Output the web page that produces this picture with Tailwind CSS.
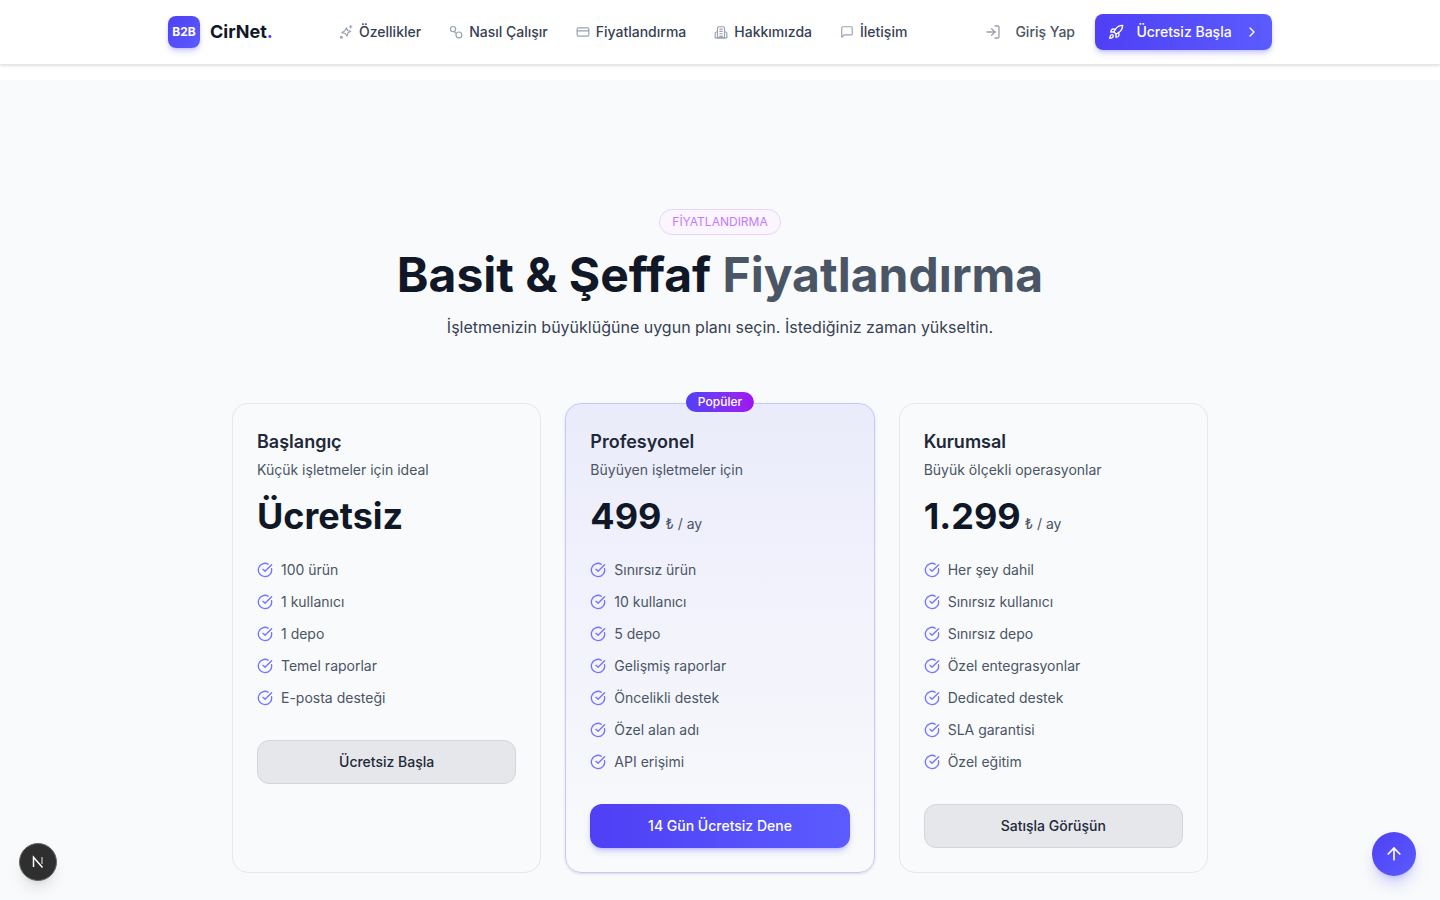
<!DOCTYPE html>
<html lang="tr">
<head>
<meta charset="utf-8">
<title>CirNet</title>
<script src="https://cdn.jsdelivr.net/npm/@tailwindcss/browser@4"></script>
</head>
<body class="bg-white font-['Inter',sans-serif] h-[900px] overflow-hidden relative">
<header class="h-[65px] bg-white border-b border-gray-200 shadow-sm">
  <div class="w-[1104px] mx-auto h-16 flex items-center">
    <div class="flex items-center gap-2.5 w-[171px]">
      <div class="w-8 h-8 rounded-lg bg-gradient-to-br from-[#4f3ff5] to-[#5b5bff] shadow-md shadow-indigo-500/30 flex items-center justify-center text-white text-xs font-bold">B2B</div>
      <span class="text-lg font-bold text-gray-900">CirNet<span class="text-[#4f46ff]">.</span></span>
    </div>
    <nav class="flex items-center gap-7 text-sm font-medium text-gray-700">
      <a class="flex items-center gap-1.5"><svg class="w-3.5 h-3.5 text-gray-400" viewBox="0 0 24 24" fill="none" stroke="currentColor" stroke-width="2" stroke-linecap="round" stroke-linejoin="round"><path d="M13 5l1.6 4.4L20 11l-4.6 2.4L14 19l-3.2-4.4L5 13l4.8-2.6z"/><path d="M20 1v4M18 3h4"/><circle cx="4" cy="21" r="1.6"/></svg>Özellikler</a>
      <a class="flex items-center gap-1.5"><svg class="w-3.5 h-3.5 text-gray-400" viewBox="0 0 24 24" fill="none" stroke="currentColor" stroke-width="2" stroke-linecap="round"><circle cx="7" cy="7" r="4.5"/><circle cx="17" cy="17" r="5"/><path d="M9 11.500l2.500 2.500"/></svg>Nasıl Çalışır</a>
      <a class="flex items-center gap-1.5"><svg class="w-3.5 h-3.5 text-gray-400" viewBox="0 0 24 24" fill="none" stroke="currentColor" stroke-width="2" stroke-linecap="round" stroke-linejoin="round"><rect x="2" y="5" width="20" height="14" rx="2"/><path d="M2 10h20"/></svg>Fiyatlandırma</a>
      <a class="flex items-center gap-1.5"><svg class="w-3.5 h-3.5 text-gray-400" viewBox="0 0 24 24" fill="none" stroke="currentColor" stroke-width="2" stroke-linecap="round" stroke-linejoin="round"><path d="M6 22V5a2 2 0 0 1 2-2h8a2 2 0 0 1 2 2v17z"/><path d="M6 12H4a2 2 0 0 0-2 2v8h20v-8a2 2 0 0 0-2-2h-2"/><path d="M10 7h4M10 11h4M10 15h4M10 22v-3h4v3"/></svg>Hakkımızda</a>
      <a class="flex items-center gap-1.5"><svg class="w-3.5 h-3.5 text-gray-400" viewBox="0 0 24 24" fill="none" stroke="currentColor" stroke-width="2" stroke-linecap="round" stroke-linejoin="round"><path d="M21 15a2 2 0 0 1-2 2H7l-4 4V5a2 2 0 0 1 2-2h14a2 2 0 0 1 2 2z"/></svg>İletişim</a>
    </nav>
    <div class="ml-auto flex items-center gap-5">
      <a class="flex items-center gap-3.5 text-sm font-medium text-gray-600"><svg class="w-4 h-4 text-gray-400" viewBox="0 0 24 24" fill="none" stroke="currentColor" stroke-width="2" stroke-linecap="round" stroke-linejoin="round"><path d="M15 3h4a2 2 0 0 1 2 2v14a2 2 0 0 1-2 2h-4"/><path d="m10 17 5-5-5-5"/><path d="M15 12H3"/></svg>Giriş Yap</a>
      <a class="h-9 w-[177px] pl-px rounded-lg bg-gradient-to-r from-[#4f3ff5] to-[#5b5bff] shadow-md shadow-indigo-500/30 flex items-center justify-center gap-3 text-sm font-medium text-white"><svg class="w-4 h-4" viewBox="0 0 24 24" fill="none" stroke="currentColor" stroke-width="2" stroke-linecap="round" stroke-linejoin="round"><path d="M4.5 16.5c-1.5 1.26-2 5-2 5s3.74-.5 5-2c.71-.84.7-2.13-.09-2.91a2.18 2.18 0 0 0-2.91-.09z"/><path d="m12 15-3-3a22 22 0 0 1 2-3.95A12.88 12.88 0 0 1 22 2c0 2.72-.78 7.5-6 11a22.35 22.35 0 0 1-4 2z"/><path d="M9 12H4s.55-3.03 2-4c1.62-1.08 5 0 5 0"/><path d="M12 15v5s3.03-.55 4-2c1.08-1.62 0-5 0-5"/></svg>Ücretsiz Başla<svg class="w-4 h-4" viewBox="0 0 24 24" fill="none" stroke="currentColor" stroke-width="2" stroke-linecap="round" stroke-linejoin="round"><path d="m9 18 6-6-6-6"/></svg></a>
    </div>
  </div>
</header>
<main class="mt-[15px] bg-gray-50 h-[820px] pt-[129px]">
  <div class="flex flex-col items-center">
    <span class="h-[26px] px-3 rounded-full bg-purple-50 border border-purple-200 text-purple-400 text-xs font-normal flex items-center">FİYATLANDIRMA</span>
    <h1 class="mt-2 text-5xl font-bold text-gray-900 leading-[64px]">Basit &amp; Şeffaf <span class="text-gray-600">Fiyatlandırma</span></h1>
    <p class="mt-2 text-base leading-6 text-gray-700">İşletmenizin büyüklüğüne uygun planı seçin. İstediğiniz zaman yükseltin.</p>
  </div>
  <div class="w-[976px] mx-auto mt-16 grid grid-cols-3 gap-6">

    <div class="rounded-2xl border border-gray-200 bg-gray-50 p-6 h-[470px]">
      <h3 class="text-lg font-semibold leading-7 text-gray-800">Başlangıç</h3>
      <p class="mt-1 text-sm leading-5 text-gray-600">Küçük işletmeler için ideal</p>
      <div class="mt-4 h-10 flex items-baseline gap-1"><span class="text-4xl leading-10 font-bold text-gray-900">Ücretsiz</span></div>
      <ul class="mt-6 flex flex-col gap-3 text-sm text-gray-600">
        <li class="flex items-center gap-2 h-5"><svg class="w-4 h-4 text-[#7274ff]" viewBox="0 0 24 24" fill="none" stroke="currentColor" stroke-width="2" stroke-linecap="round" stroke-linejoin="round"><path d="M21.801 10A10 10 0 1 1 17 3.335"/><path d="m9 11 3 3L22 4"/></svg>100 ürün</li>
        <li class="flex items-center gap-2 h-5"><svg class="w-4 h-4 text-[#7274ff]" viewBox="0 0 24 24" fill="none" stroke="currentColor" stroke-width="2" stroke-linecap="round" stroke-linejoin="round"><path d="M21.801 10A10 10 0 1 1 17 3.335"/><path d="m9 11 3 3L22 4"/></svg>1 kullanıcı</li>
        <li class="flex items-center gap-2 h-5"><svg class="w-4 h-4 text-[#7274ff]" viewBox="0 0 24 24" fill="none" stroke="currentColor" stroke-width="2" stroke-linecap="round" stroke-linejoin="round"><path d="M21.801 10A10 10 0 1 1 17 3.335"/><path d="m9 11 3 3L22 4"/></svg>1 depo</li>
        <li class="flex items-center gap-2 h-5"><svg class="w-4 h-4 text-[#7274ff]" viewBox="0 0 24 24" fill="none" stroke="currentColor" stroke-width="2" stroke-linecap="round" stroke-linejoin="round"><path d="M21.801 10A10 10 0 1 1 17 3.335"/><path d="m9 11 3 3L22 4"/></svg>Temel raporlar</li>
        <li class="flex items-center gap-2 h-5"><svg class="w-4 h-4 text-[#7274ff]" viewBox="0 0 24 24" fill="none" stroke="currentColor" stroke-width="2" stroke-linecap="round" stroke-linejoin="round"><path d="M21.801 10A10 10 0 1 1 17 3.335"/><path d="m9 11 3 3L22 4"/></svg>E-posta desteği</li>
      </ul>
      <button class="mt-8 w-full h-11 rounded-xl bg-gray-200 border border-gray-300 text-sm font-medium text-gray-800">Ücretsiz Başla</button>
    </div>

    <div class="relative rounded-2xl border border-[#c7c6fe] bg-gradient-to-b from-[#ebecfb] to-gray-50 p-6 h-[470px] shadow-sm">
      <span class="absolute -top-3 left-1/2 -translate-x-1/2 h-5 px-3 rounded-full bg-gradient-to-r from-[#4f3ff5] to-[#a010f0] text-white text-xs font-medium flex items-center">Popüler</span>
      <h3 class="text-lg font-semibold leading-7 text-gray-800">Profesyonel</h3>
      <p class="mt-1 text-sm leading-5 text-gray-600">Büyüyen işletmeler için</p>
      <div class="mt-4 h-10 flex items-baseline gap-1"><span class="text-4xl leading-10 font-bold text-gray-900">499</span><span class="text-sm text-gray-600">₺ / ay</span></div>
      <ul class="mt-6 flex flex-col gap-3 text-sm text-gray-600">
        <li class="flex items-center gap-2 h-5"><svg class="w-4 h-4 text-[#7274ff]" viewBox="0 0 24 24" fill="none" stroke="currentColor" stroke-width="2" stroke-linecap="round" stroke-linejoin="round"><path d="M21.801 10A10 10 0 1 1 17 3.335"/><path d="m9 11 3 3L22 4"/></svg>Sınırsız ürün</li>
        <li class="flex items-center gap-2 h-5"><svg class="w-4 h-4 text-[#7274ff]" viewBox="0 0 24 24" fill="none" stroke="currentColor" stroke-width="2" stroke-linecap="round" stroke-linejoin="round"><path d="M21.801 10A10 10 0 1 1 17 3.335"/><path d="m9 11 3 3L22 4"/></svg>10 kullanıcı</li>
        <li class="flex items-center gap-2 h-5"><svg class="w-4 h-4 text-[#7274ff]" viewBox="0 0 24 24" fill="none" stroke="currentColor" stroke-width="2" stroke-linecap="round" stroke-linejoin="round"><path d="M21.801 10A10 10 0 1 1 17 3.335"/><path d="m9 11 3 3L22 4"/></svg>5 depo</li>
        <li class="flex items-center gap-2 h-5"><svg class="w-4 h-4 text-[#7274ff]" viewBox="0 0 24 24" fill="none" stroke="currentColor" stroke-width="2" stroke-linecap="round" stroke-linejoin="round"><path d="M21.801 10A10 10 0 1 1 17 3.335"/><path d="m9 11 3 3L22 4"/></svg>Gelişmiş raporlar</li>
        <li class="flex items-center gap-2 h-5"><svg class="w-4 h-4 text-[#7274ff]" viewBox="0 0 24 24" fill="none" stroke="currentColor" stroke-width="2" stroke-linecap="round" stroke-linejoin="round"><path d="M21.801 10A10 10 0 1 1 17 3.335"/><path d="m9 11 3 3L22 4"/></svg>Öncelikli destek</li>
        <li class="flex items-center gap-2 h-5"><svg class="w-4 h-4 text-[#7274ff]" viewBox="0 0 24 24" fill="none" stroke="currentColor" stroke-width="2" stroke-linecap="round" stroke-linejoin="round"><path d="M21.801 10A10 10 0 1 1 17 3.335"/><path d="m9 11 3 3L22 4"/></svg>Özel alan adı</li>
        <li class="flex items-center gap-2 h-5"><svg class="w-4 h-4 text-[#7274ff]" viewBox="0 0 24 24" fill="none" stroke="currentColor" stroke-width="2" stroke-linecap="round" stroke-linejoin="round"><path d="M21.801 10A10 10 0 1 1 17 3.335"/><path d="m9 11 3 3L22 4"/></svg>API erişimi</li>
      </ul>
      <button class="mt-8 w-full h-11 rounded-xl bg-gradient-to-r from-[#4f3ff5] to-[#5b5bff] shadow-md shadow-indigo-500/30 text-sm font-medium text-white">14 Gün Ücretsiz Dene</button>
    </div>

    <div class="rounded-2xl border border-gray-200 bg-gray-50 p-6 h-[470px]">
      <h3 class="text-lg font-semibold leading-7 text-gray-800">Kurumsal</h3>
      <p class="mt-1 text-sm leading-5 text-gray-600">Büyük ölçekli operasyonlar</p>
      <div class="mt-4 h-10 flex items-baseline gap-1"><span class="text-4xl leading-10 font-bold text-gray-900">1.299</span><span class="text-sm text-gray-600">₺ / ay</span></div>
      <ul class="mt-6 flex flex-col gap-3 text-sm text-gray-600">
        <li class="flex items-center gap-2 h-5"><svg class="w-4 h-4 text-[#7274ff]" viewBox="0 0 24 24" fill="none" stroke="currentColor" stroke-width="2" stroke-linecap="round" stroke-linejoin="round"><path d="M21.801 10A10 10 0 1 1 17 3.335"/><path d="m9 11 3 3L22 4"/></svg>Her şey dahil</li>
        <li class="flex items-center gap-2 h-5"><svg class="w-4 h-4 text-[#7274ff]" viewBox="0 0 24 24" fill="none" stroke="currentColor" stroke-width="2" stroke-linecap="round" stroke-linejoin="round"><path d="M21.801 10A10 10 0 1 1 17 3.335"/><path d="m9 11 3 3L22 4"/></svg>Sınırsız kullanıcı</li>
        <li class="flex items-center gap-2 h-5"><svg class="w-4 h-4 text-[#7274ff]" viewBox="0 0 24 24" fill="none" stroke="currentColor" stroke-width="2" stroke-linecap="round" stroke-linejoin="round"><path d="M21.801 10A10 10 0 1 1 17 3.335"/><path d="m9 11 3 3L22 4"/></svg>Sınırsız depo</li>
        <li class="flex items-center gap-2 h-5"><svg class="w-4 h-4 text-[#7274ff]" viewBox="0 0 24 24" fill="none" stroke="currentColor" stroke-width="2" stroke-linecap="round" stroke-linejoin="round"><path d="M21.801 10A10 10 0 1 1 17 3.335"/><path d="m9 11 3 3L22 4"/></svg>Özel entegrasyonlar</li>
        <li class="flex items-center gap-2 h-5"><svg class="w-4 h-4 text-[#7274ff]" viewBox="0 0 24 24" fill="none" stroke="currentColor" stroke-width="2" stroke-linecap="round" stroke-linejoin="round"><path d="M21.801 10A10 10 0 1 1 17 3.335"/><path d="m9 11 3 3L22 4"/></svg>Dedicated destek</li>
        <li class="flex items-center gap-2 h-5"><svg class="w-4 h-4 text-[#7274ff]" viewBox="0 0 24 24" fill="none" stroke="currentColor" stroke-width="2" stroke-linecap="round" stroke-linejoin="round"><path d="M21.801 10A10 10 0 1 1 17 3.335"/><path d="m9 11 3 3L22 4"/></svg>SLA garantisi</li>
        <li class="flex items-center gap-2 h-5"><svg class="w-4 h-4 text-[#7274ff]" viewBox="0 0 24 24" fill="none" stroke="currentColor" stroke-width="2" stroke-linecap="round" stroke-linejoin="round"><path d="M21.801 10A10 10 0 1 1 17 3.335"/><path d="m9 11 3 3L22 4"/></svg>Özel eğitim</li>
      </ul>
      <button class="mt-8 w-full h-11 rounded-xl bg-gray-200 border border-gray-300 text-sm font-medium text-gray-800">Satışla Görüşün</button>
    </div>
  </div>
</main>
<div class="absolute left-[19px] top-[843px] w-[38px] h-[38px] rounded-full bg-[#2f2f2f] border border-[#666] shadow-lg flex items-center justify-center">
  <svg class="w-3.5 h-3.5" viewBox="0 0 14 14" fill="none" stroke="white" stroke-width="1.5"><path d="M2.500 12V2.200L11.500 12.500"/><path d="M11 2v7" stroke-opacity=".6"/></svg>
</div>
<button class="absolute left-[1372px] top-[832px] w-11 h-11 rounded-full bg-gradient-to-br from-[#4f3ff5] to-[#5b5bff] shadow-lg shadow-indigo-500/30 flex items-center justify-center text-white">
  <svg class="w-5 h-5" viewBox="0 0 24 24" fill="none" stroke="currentColor" stroke-width="2" stroke-linecap="round" stroke-linejoin="round"><path d="m5 12 7-7 7 7"/><path d="M12 19V5"/></svg>
</button>
</body>
</html>
